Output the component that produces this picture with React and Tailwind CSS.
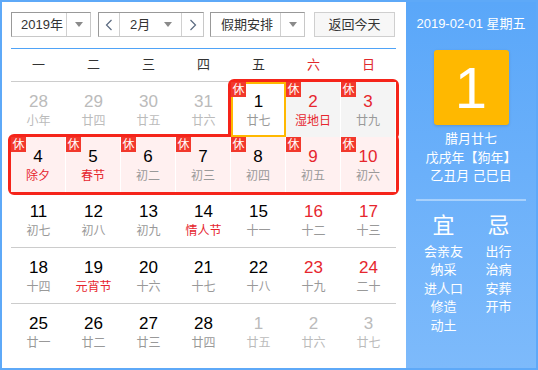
import React from 'react';

const weekDays = ['一', '二', '三', '四', '五', '六', '日'];

// d: 日期, l: 农历/节日
const rows = [
  [
    { d: 28, l: '小年', o: true },
    { d: 29, l: '廿四', o: true },
    { d: 30, l: '廿五', o: true },
    { d: 31, l: '廿六', o: true },
    { d: 1, l: '廿七', rest: true, sel: true },
    { d: 2, l: '湿地日', rest: true, red: true, fest: true, gray: true },
    { d: 3, l: '廿九', rest: true, red: true, gray: true },
  ],
  [
    { d: 4, l: '除夕', rest: true, fest: true, pink: true },
    { d: 5, l: '春节', rest: true, fest: true, pink: true },
    { d: 6, l: '初二', rest: true, pink: true },
    { d: 7, l: '初三', rest: true, pink: true },
    { d: 8, l: '初四', rest: true, pink: true },
    { d: 9, l: '初五', rest: true, red: true, pink: true },
    { d: 10, l: '初六', rest: true, red: true, pink: true },
  ],
  [
    { d: 11, l: '初七' },
    { d: 12, l: '初八' },
    { d: 13, l: '初九' },
    { d: 14, l: '情人节', fest: true },
    { d: 15, l: '十一' },
    { d: 16, l: '十二', red: true },
    { d: 17, l: '十三', red: true },
  ],
  [
    { d: 18, l: '十四' },
    { d: 19, l: '元宵节', fest: true },
    { d: 20, l: '十六' },
    { d: 21, l: '十七' },
    { d: 22, l: '十八' },
    { d: 23, l: '十九', red: true },
    { d: 24, l: '二十', red: true },
  ],
  [
    { d: 25, l: '廿一' },
    { d: 26, l: '廿二' },
    { d: 27, l: '廿三' },
    { d: 28, l: '廿四' },
    { d: 1, l: '廿五', o: true },
    { d: 2, l: '廿六', o: true },
    { d: 3, l: '廿七', o: true },
  ],
];

const yi = ['会亲友', '纳采', '进人口', '修造', '动土'];
const ji = ['出行', '治病', '安葬', '开市'];

function Arrow() {
  return <span className="block h-0 w-0 border-x-[4px] border-t-[5px] border-x-transparent border-t-[#8a8a8a]" />;
}

function Chevron({ dir }) {
  return (
    <svg width="8" height="12" viewBox="0 0 8 12" fill="none" stroke="#5a6a80" strokeWidth="1.2">
      {dir === 'l' ? <polyline points="6.5,1 1.5,6 6.5,11" /> : <polyline points="1.5,1 6.5,6 1.5,11" />}
    </svg>
  );
}

function Cell({ c }) {
  let bg = '';
  if (c.sel) bg = 'bg-white shadow-[inset_0_0_0_2px_#ffb800]';
  if (c.pink) bg = 'bg-[#fff0f0] border-r border-white';
  if (c.gray) bg = 'bg-[#f4f4f4] border-r border-white';
  const numColor = c.o ? 'text-[#bbbbbb]' : c.red ? 'text-[#e6262e]' : 'text-black';
  const lunarColor = c.o ? 'text-[#bbbbbb]' : c.fest ? 'text-[#e6262e]' : 'text-[#999999]';
  return (
    <div className={`relative flex h-[55px] flex-col items-center pt-[10px] ${bg}`}>
      {c.rest && (
        <span className="absolute left-0 top-0 flex h-[15px] w-[15px] items-center justify-center bg-[#f2382c] text-[12px] leading-none text-white">休</span>
      )}
      <span className={`font-['Liberation_Sans','Noto_Sans_CJK_SC',sans-serif] text-[17px] leading-[20px] ${numColor}`}>{c.d}</span>
      <span className={`text-[12px] leading-[18px] ${lunarColor}`}>{c.l}</span>
    </div>
  );
}

export default function App() {
  return (
    <div className="flex h-[370px] w-[538px] border-2 border-[#5ea9f8] font-['Liberation_Sans','Noto_Sans_CJK_SC',sans-serif] text-[#333]">
      {/* 左侧日历 */}
      <div className="w-[404px] bg-white pl-[9px] pt-[10px]">
        <div className="flex h-[25px] items-stretch text-[13px]">
          <div className="flex w-[80px] border border-[#c8c8c8] border-l-[#999] border-t-[#999]">
            <span className="flex flex-1 items-center pl-[9px]">2019年</span>
            <span className="flex w-[24px] items-center justify-center border-l border-[#d0d0d0]"><Arrow /></span>
          </div>
          <div className="ml-[7px] flex w-[106px] border border-[#c8c8c8] border-l-[#999] border-t-[#999]">
            <span className="flex w-[21px] items-center justify-center border-r border-[#d0d0d0]"><Chevron dir="l" /></span>
            <span className="flex flex-1 items-center justify-between pl-[10px] pr-[9px]">2月<Arrow /></span>
            <span className="flex w-[22px] items-center justify-center border-l border-[#d0d0d0]"><Chevron dir="r" /></span>
          </div>
          <div className="ml-[6px] flex w-[95px] border border-[#c8c8c8] border-l-[#999] border-t-[#999]">
            <span className="flex flex-1 items-center pl-[10px]">假期安排</span>
            <span className="flex w-[24px] items-center justify-center border-l border-[#d0d0d0]"><Arrow /></span>
          </div>
          <button className="ml-[9px] flex w-[81px] items-center justify-center border border-[#cfcfcf] bg-[#f7f7f7] text-[13px] text-[#333]">返回今天</button>
        </div>

        <div className="mt-[11px] w-[385px] border-t border-[#4fa3f7]" />
        <div className="grid h-[33px] w-[385px] grid-cols-7 border-b border-[#cccccc] text-[13px]">
          {weekDays.map((w, i) => (
            <div key={w} className={`flex items-center justify-center ${i > 4 ? 'text-[#e0282c]' : 'text-[#333]'}`}>{w}</div>
          ))}
        </div>

        <div className="w-[385px]">
          <div className="grid grid-cols-7">
            {rows[0].slice(0, 4).map((c, i) => <Cell key={i} c={c} />)}
            <div className="col-span-3 grid grid-cols-3 rounded-[3px] outline-[3px] outline-solid outline-[#f5241a]">
              {rows[0].slice(4).map((c, i) => <Cell key={i} c={c} />)}
            </div>
          </div>
          <div className="grid grid-cols-7 rounded-[3px] outline-[3px] outline-solid outline-[#f5241a]">
            {rows[1].map((c, i) => <Cell key={i} c={c} />)}
          </div>
          {rows.slice(2).map((r, ri) => (
            <div key={ri} className={`grid grid-cols-7 ${ri < 2 ? 'border-b border-[#cccccc]' : ''}`}>
              {r.map((c, i) => <Cell key={i} c={c} />)}
            </div>
          ))}
        </div>
      </div>

      {/* 右侧详情 */}
      <div className="flex w-[130px] flex-col items-center bg-gradient-to-b from-[#5aa7f9] to-[#7dbafb] text-white">
        <div className="mt-[13px] text-[13px] leading-[18px]">2019-02-01 星期五</div>
        <div className="mt-[17px] flex h-[75px] w-[75px] items-center justify-center rounded-[3px] bg-[#ffb800] text-[58px] leading-none shadow-[0_1px_3px_rgba(0,0,0,0.15)]">1</div>
        <div className="mt-[5px] flex flex-col items-center text-[13px] leading-[18.5px]">
          <span>腊月廿七</span>
          <span>戊戌年【狗年】</span>
          <span>乙丑月 己巳日</span>
        </div>
        <div className="mt-[13px] h-[2px] w-[110px] bg-white/40" />
        <div className="mt-[12px] flex w-[110px]">
          <div className="flex w-[55px] flex-col items-center">
            <span className="mb-[4px] text-[22px] leading-[26px]">宜</span>
            {yi.map((t) => <span key={t} className="text-[13px] leading-[18.5px]">{t}</span>)}
          </div>
          <div className="flex w-[55px] flex-col items-center">
            <span className="mb-[4px] text-[22px] leading-[26px]">忌</span>
            {ji.map((t) => <span key={t} className="text-[13px] leading-[18.5px]">{t}</span>)}
          </div>
        </div>
      </div>
    </div>
  );
}
